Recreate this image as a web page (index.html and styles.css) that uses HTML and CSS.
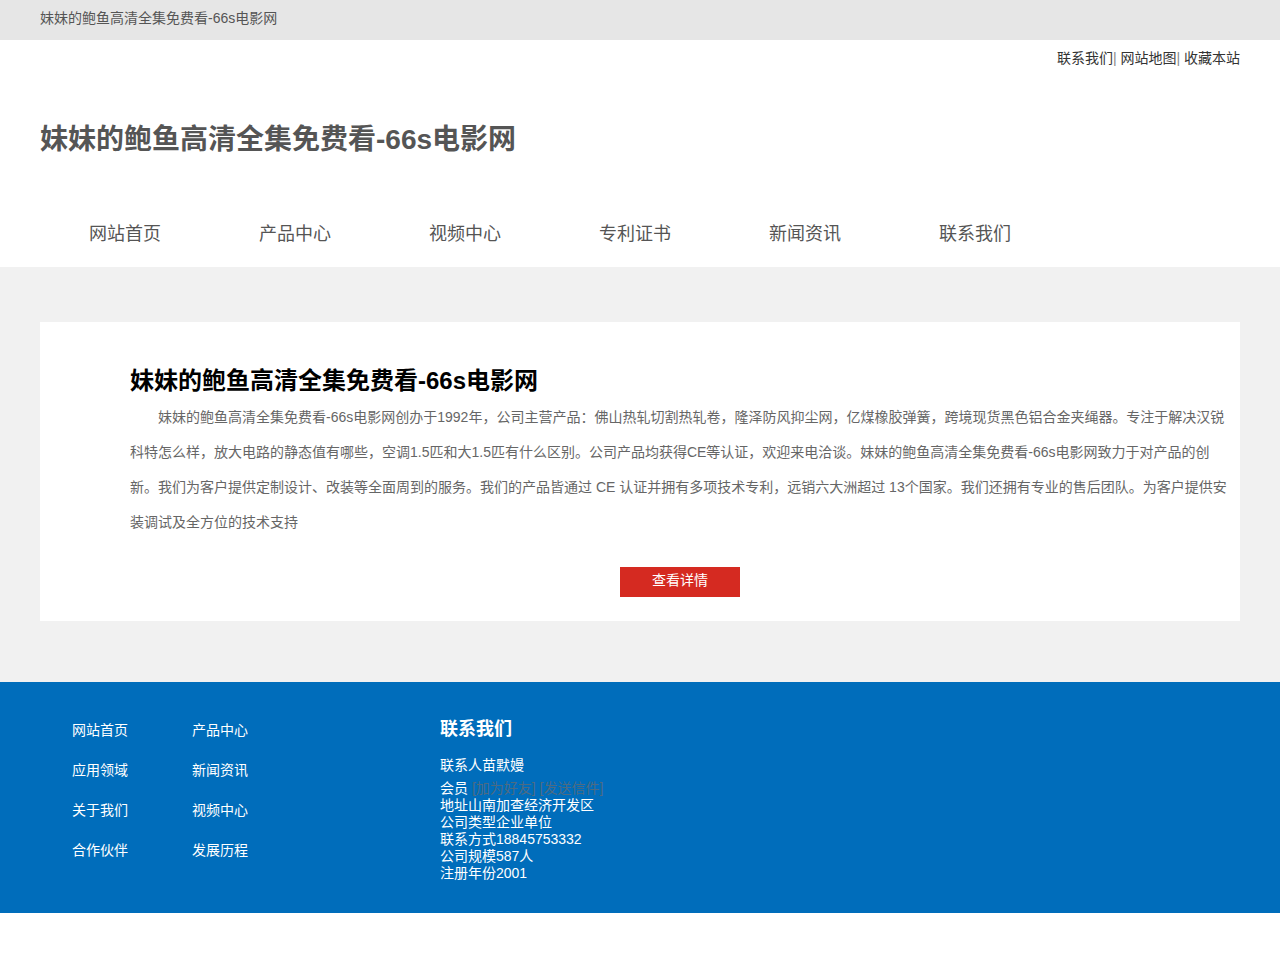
FILE: index.html
```html
<!DOCTYPE html>
<html lang="zh-CN">
<head>
<meta charset="UTF-8">
<title>妹妹的鲍鱼高清全集免费看-66s电影网</title>
<link rel="stylesheet" href="styles.css">
</head>
<body>
<div class="topbar">
    <div class="wrap">妹妹的鲍鱼高清全集免费看-66s电影网</div>
</div>
<div class="header">
    <div class="wrap">
        <div class="toplinks"><a href="#">联系我们</a>| <a href="#">网站地图</a>| <a href="#">收藏本站</a></div>
        <div class="logo">妹妹的鲍鱼高清全集免费看-66s电影网</div>
        <ul class="nav">
            <li><a href="#">网站首页</a></li>
            <li><a href="#">产品中心</a></li>
            <li><a href="#">视频中心</a></li>
            <li><a href="#">专利证书</a></li>
            <li><a href="#">新闻资讯</a></li>
            <li><a href="#">联系我们</a></li>
        </ul>
    </div>
</div>
<div class="main">
    <div class="wrap">
        <div class="about">
            <h2>妹妹的鲍鱼高清全集免费看-66s电影网</h2>
            <p>妹妹的鲍鱼高清全集免费看-66s电影网创办于1992年，公司主营产品：佛山热轧切割热轧卷，隆泽防风抑尘网，亿煤橡胶弹簧，跨境现货黑色铝合金夹绳器。专注于解决汉锐科特怎么样，放大电路的静态值有哪些，空调1.5匹和大1.5匹有什么区别。公司产品均获得CE等认证，欢迎来电洽谈。妹妹的鲍鱼高清全集免费看-66s电影网致力于对产品的创新。我们为客户提供定制设计、改装等全面周到的服务。我们的产品皆通过 CE 认证并拥有多项技术专利，远销六大洲超过 13个国家。我们还拥有专业的售后团队。为客户提供安装调试及全方位的技术支持</p>
            <div class="more"><a href="#">查看详情</a></div>
        </div>
    </div>
</div>
<div class="footer">
    <div class="wrap">
        <ul class="flinks">
            <li><a href="#">网站首页</a></li>
            <li><a href="#">产品中心</a></li>
            <li><a href="#">应用领域</a></li>
            <li><a href="#">新闻资讯</a></li>
            <li><a href="#">关于我们</a></li>
            <li><a href="#">视频中心</a></li>
            <li><a href="#">合作伙伴</a></li>
            <li><a href="#">发展历程</a></li>
        </ul>
        <div class="contact">
            <h3>联系我们</h3>
            <p class="person">联系人苗默嫚</p>
            <p>会员 <a href="#">[加为好友]</a> <a href="#">[发送信件]</a></p>
            <p>地址山南加查经济开发区</p>
            <p>公司类型企业单位</p>
            <p>联系方式18845753332</p>
            <p>公司规模587人</p>
            <p>注册年份2001</p>
        </div>
    </div>
</div>
</body>
</html>
```

FILE: styles.css
```css
body,div,h2,h3,p,ul,li{margin:0;padding:0;}
ul{list-style:none;}
a{text-decoration:none;color:inherit;}
body{font:14px/1.5 "Liberation Sans","Noto Sans CJK SC",sans-serif;color:#333;background:#fff;}
.wrap{width:1200px;margin:0 auto;}

.topbar{height:40px;background:#e6e6e6;color:#555;line-height:36px;}

.header{background:#fff;height:227px;}
.header .wrap{display:flex;flex-direction:column;}
.toplinks{text-align:right;color:#888;line-height:20px;padding-top:8px;}
.toplinks a{color:#333;}
.logo{font-size:28px;font-weight:bold;color:#555;line-height:40px;margin-top:52px;}
.nav{display:flex;margin-top:61px;}
.nav li{width:170px;text-align:center;font-size:18px;line-height:26px;color:#555;}

.main{background:#f1f1f1;padding:55px 0 61px;}
.about{background:#fff;padding:40px 10px 24px 90px;}
.about h2{font-size:24px;color:#000;line-height:38px;}
.about p{color:#666;line-height:35px;text-indent:2em;font-size:14px;}
.more{text-align:center;margin-top:27px;}
.more a{display:inline-block;width:120px;height:30px;line-height:27px;background:#d52a21;color:#fff;font-size:14px;}

.footer{background:#006dbb;color:#fff;padding:30px 0 31px;}
.footer .wrap{display:flex;align-items:flex-start;}
.flinks{display:grid;grid-template-columns:120px 120px;width:368px;padding-left:32px;}
.flinks li{height:40px;line-height:36px;font-size:14px;}
.contact h3{font-size:18px;line-height:34px;}
.contact p{font-size:14px;line-height:17px;}
.contact .person{margin:11px 0 6px;}
.contact p a{color:#4d6b82;}
```
